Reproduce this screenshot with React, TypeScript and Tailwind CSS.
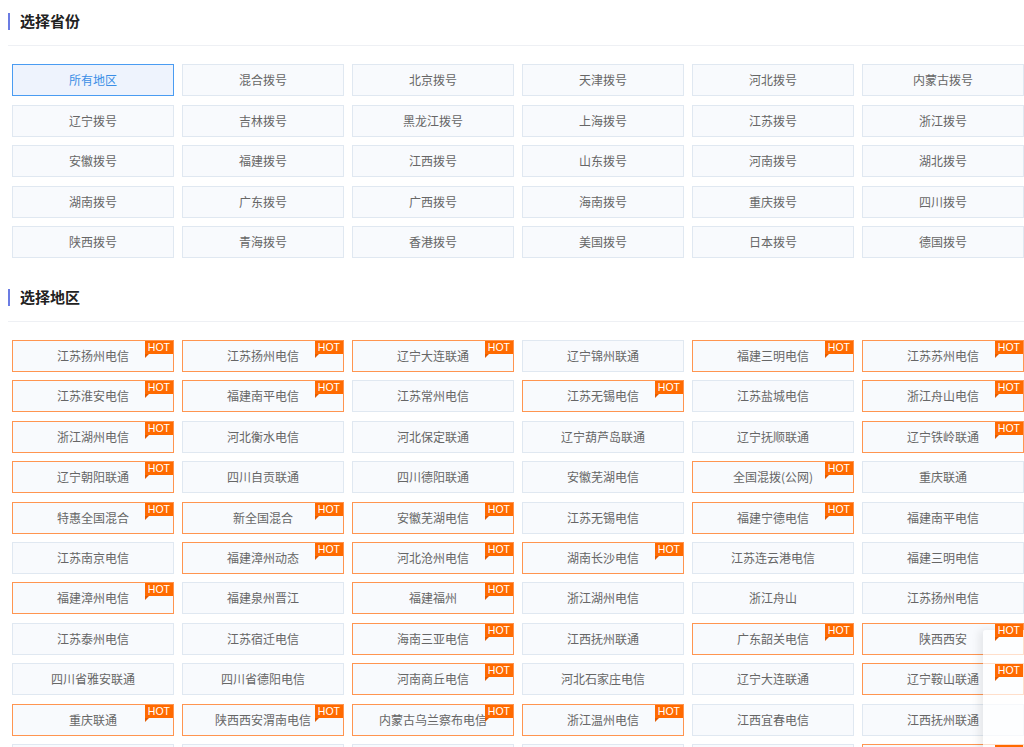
import React from 'react';

type Region = { name: string; hot?: boolean };

const provinces = [
  '所有地区', '混合拨号', '北京拨号', '天津拨号', '河北拨号', '内蒙古拨号',
  '辽宁拨号', '吉林拨号', '黑龙江拨号', '上海拨号', '江苏拨号', '浙江拨号',
  '安徽拨号', '福建拨号', '江西拨号', '山东拨号', '河南拨号', '湖北拨号',
  '湖南拨号', '广东拨号', '广西拨号', '海南拨号', '重庆拨号', '四川拨号',
  '陕西拨号', '青海拨号', '香港拨号', '美国拨号', '日本拨号', '德国拨号',
];

const regions: Region[] = [
  { name: '江苏扬州电信', hot: true }, { name: '江苏扬州电信', hot: true }, { name: '辽宁大连联通', hot: true },
  { name: '辽宁锦州联通' }, { name: '福建三明电信', hot: true }, { name: '江苏苏州电信', hot: true },
  { name: '江苏淮安电信', hot: true }, { name: '福建南平电信', hot: true }, { name: '江苏常州电信' },
  { name: '江苏无锡电信', hot: true }, { name: '江苏盐城电信' }, { name: '浙江舟山电信', hot: true },
  { name: '浙江湖州电信', hot: true }, { name: '河北衡水电信' }, { name: '河北保定联通' },
  { name: '辽宁葫芦岛联通' }, { name: '辽宁抚顺联通' }, { name: '辽宁铁岭联通', hot: true },
  { name: '辽宁朝阳联通', hot: true }, { name: '四川自贡联通' }, { name: '四川德阳联通' },
  { name: '安徽芜湖电信' }, { name: '全国混拨(公网)', hot: true }, { name: '重庆联通' },
  { name: '特惠全国混合', hot: true }, { name: '新全国混合', hot: true }, { name: '安徽芜湖电信', hot: true },
  { name: '江苏无锡电信' }, { name: '福建宁德电信', hot: true }, { name: '福建南平电信' },
  { name: '江苏南京电信' }, { name: '福建漳州动态', hot: true }, { name: '河北沧州电信', hot: true },
  { name: '湖南长沙电信', hot: true }, { name: '江苏连云港电信' }, { name: '福建三明电信' },
  { name: '福建漳州电信', hot: true }, { name: '福建泉州晋江' }, { name: '福建福州', hot: true },
  { name: '浙江湖州电信' }, { name: '浙江舟山' }, { name: '江苏扬州电信' },
  { name: '江苏泰州电信' }, { name: '江苏宿迁电信' }, { name: '海南三亚电信', hot: true },
  { name: '江西抚州联通' }, { name: '广东韶关电信', hot: true }, { name: '陕西西安', hot: true },
  { name: '四川省雅安联通' }, { name: '四川省德阳电信' }, { name: '河南商丘电信', hot: true },
  { name: '河北石家庄电信' }, { name: '辽宁大连联通' }, { name: '辽宁鞍山联通', hot: true },
  { name: '重庆联通', hot: true }, { name: '陕西西安渭南电信', hot: true }, { name: '内蒙古乌兰察布电信', hot: true },
  { name: '浙江温州电信', hot: true }, { name: '江西宜春电信' }, { name: '江西抚州联通' },
  { name: '江苏镇江电信' }, { name: '福建莆田电信' }, { name: '江苏徐州电信' },
  { name: '湖北武汉电信' }, { name: '广东广州电信' }, { name: '浙江杭州电信', hot: true },
];

function SectionTitle({ title }: { title: string }) {
  return (
    <div className="h-[46px] pb-[3px] flex items-center border-b border-[#eef0f4]">
      <span className="w-[2px] h-[17px] bg-[#6b7ce3]" />
      <h2 className="ml-[10px] text-[15px] font-bold text-[#222]">{title}</h2>
    </div>
  );
}

function Cell({ name, active, hot }: { name: string; active?: boolean; hot?: boolean }) {
  const tone = active
    ? 'border-[#4a9cf2] bg-[#eef3fd] text-[#3a8ee6]'
    : hot
      ? 'border-[#ff9550] bg-[#f8fafd] text-[#666]'
      : 'border-[#e0e8f1] bg-[#f8fafd] text-[#666]';
  return (
    <div className={`relative h-[32px] border flex items-center justify-center text-[12px] cursor-pointer ${tone}`}>
      {name}
      {hot && (
        <span className="absolute top-0 right-0 z-20">
          <span className="block h-[13px] px-[3px] bg-[#ff6a00] text-white text-[10.5px] leading-[13px] font-['Liberation_Sans',sans-serif]">
            HOT
          </span>
          <span className="absolute left-0 top-[13px] w-0 h-0 border-t-[4px] border-t-[#e35a00] border-r-[4px] border-r-transparent" />
        </span>
      )}
    </div>
  );
}

export default function App() {
  return (
    <div className="relative min-h-screen w-[1024px] overflow-hidden bg-white pl-2 font-['Noto_Sans_CJK_SC','Noto_Sans',sans-serif]">
      <section>
        <SectionTitle title="选择省份" />
        <div className="mt-[18px] pl-1 grid grid-cols-[repeat(6,162px)] gap-x-2 gap-y-[8.5px]">
          {provinces.map((p, i) => (
            <Cell key={p} name={p} active={i === 0} />
          ))}
        </div>
      </section>

      <section className="mt-[18px]">
        <SectionTitle title="选择地区" />
        <div className="mt-[18px] pl-1 grid grid-cols-[repeat(6,162px)] gap-x-2 gap-y-[8.4px]">
          {regions.map((r, i) => (
            <Cell key={i} name={r.name} hot={r.hot} />
          ))}
        </div>
      </section>

      <div className="fixed right-0 top-[630px] w-[41px] h-[140px] z-10 bg-white/70 rounded-tl-[3px] shadow-[-4px_0_8px_rgba(0,0,0,0.08)] pointer-events-none" />
    </div>
  );
}
